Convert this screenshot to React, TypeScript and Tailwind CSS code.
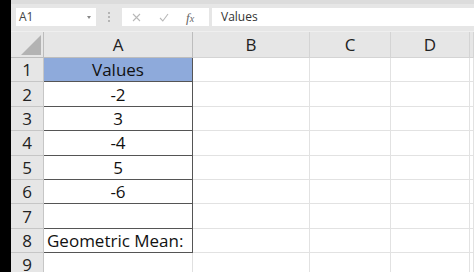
const rows: { n: number; a: string; align: 'center' | 'left'; blue?: boolean; boxed: boolean }[] = [
  { n: 1, a: 'Values', align: 'center', blue: true, boxed: true },
  { n: 2, a: '-2', align: 'center', boxed: true },
  { n: 3, a: '3', align: 'center', boxed: true },
  { n: 4, a: '-4', align: 'center', boxed: true },
  { n: 5, a: '5', align: 'center', boxed: true },
  { n: 6, a: '-6', align: 'center', boxed: true },
  { n: 7, a: '', align: 'center', boxed: true },
  { n: 8, a: 'Geometric Mean:', align: 'left', boxed: true },
  { n: 9, a: '', align: 'center', boxed: false },
];

const cols = ['B', 'C', 'D', ''];

export default function App() {
  return (
    <div className="w-[474px] h-[272px] overflow-hidden flex bg-black font-['Open_Sans',sans-serif]">
      {/* left black strip */}
      <div className="w-[11px] shrink-0 bg-black" />

      <div className="flex-1 flex flex-col bg-[#e6e6e6]">
        {/* formula bar */}
        <div className="h-[31px] shrink-0 flex items-start pt-[4px] border-t-[4px] border-[#dcdcdc]">
          <div className="ml-[5px] w-[80px] h-[18px] bg-white flex items-center justify-between pl-[3px] pr-[5px]">
            <span className="text-[12px] text-[#444] leading-none">A1</span>
            <span className="w-0 h-0 border-l-[2.5px] border-r-[2.5px] border-t-[3px] border-l-transparent border-r-transparent border-t-[#888]" />
          </div>
          <div className="w-[26px] h-[18px] flex flex-col items-center justify-center gap-[2px]">
            <span className="w-[2px] h-[2px] bg-[#b5b5b5]" />
            <span className="w-[2px] h-[2px] bg-[#b5b5b5]" />
            <span className="w-[2px] h-[2px] bg-[#b5b5b5]" />
          </div>
          <div className="w-[87px] h-[18px] bg-white flex items-center">
            <svg className="ml-[10px]" width="9" height="9" viewBox="0 0 9 9">
              <path d="M1 1L8 8M8 1L1 8" stroke="#b8b8b8" strokeWidth="1.1" fill="none" />
            </svg>
            <svg className="ml-[18px]" width="10" height="9" viewBox="0 0 10 9">
              <path d="M1 5L3.8 8L9 1" stroke="#b8b8b8" strokeWidth="1.1" fill="none" />
            </svg>
            <span className="ml-[17px] text-[13px] leading-none italic text-[#666] font-['Liberation_Serif',serif]">
              f<span className="text-[10px]">x</span>
            </span>
          </div>
          <div className="ml-[3px] flex-1 h-[18px] bg-white flex items-center pl-[9px]">
            <span className="text-[12px] leading-none text-[#333]">Values</span>
          </div>
        </div>

        {/* column header row */}
        <div className="h-[27px] shrink-0 grid grid-cols-[33px_149px_117px_81px_79px_1fr] bg-[#e6e6e6] border-t border-[#efefef]">
          <div className="relative border-r border-b border-[#bdbdbd]">
            <svg className="absolute right-[2px] bottom-[2px]" width="20" height="20" viewBox="0 0 20 20">
              <path d="M20 0L20 20L0 20Z" fill="#b3b3b3" />
            </svg>
          </div>
          <div className="flex items-center justify-center border-r border-b border-[#bdbdbd] text-[17px] text-[#222] leading-none">A</div>
          {cols.map((c, i) => (
            <div key={i} className="flex items-center justify-center border-r border-b border-[#d4d4d4] text-[17px] text-[#222] leading-none">
              {c}
            </div>
          ))}
        </div>

        {/* grid body */}
        <div className="flex-1 bg-white">
          {rows.map((r) => (
            <div key={r.n} className="h-[24.4px] grid grid-cols-[33px_149px_117px_81px_79px_1fr]">
              <div className="flex items-center justify-center bg-[#e6e6e6] border-r border-b border-[#c6c6c6] text-[17px] text-[#222] leading-none">
                {r.n}
              </div>
              <div
                className={`flex items-center text-[17px] text-[#111] leading-none ${
                  r.align === 'left' ? 'justify-start pl-[3px]' : 'justify-center'
                } ${r.blue ? 'bg-[#8eaadb]' : 'bg-white'} ${
                  r.boxed ? 'border-r border-b border-[#555]' : 'border-r border-b border-[#e0e0e0]'
                }`}
              >
                {r.a}
              </div>
              {cols.map((_, i) => (
                <div key={i} className="border-r border-b border-[#e2e2e2]" />
              ))}
            </div>
          ))}
        </div>
      </div>
    </div>
  );
}
